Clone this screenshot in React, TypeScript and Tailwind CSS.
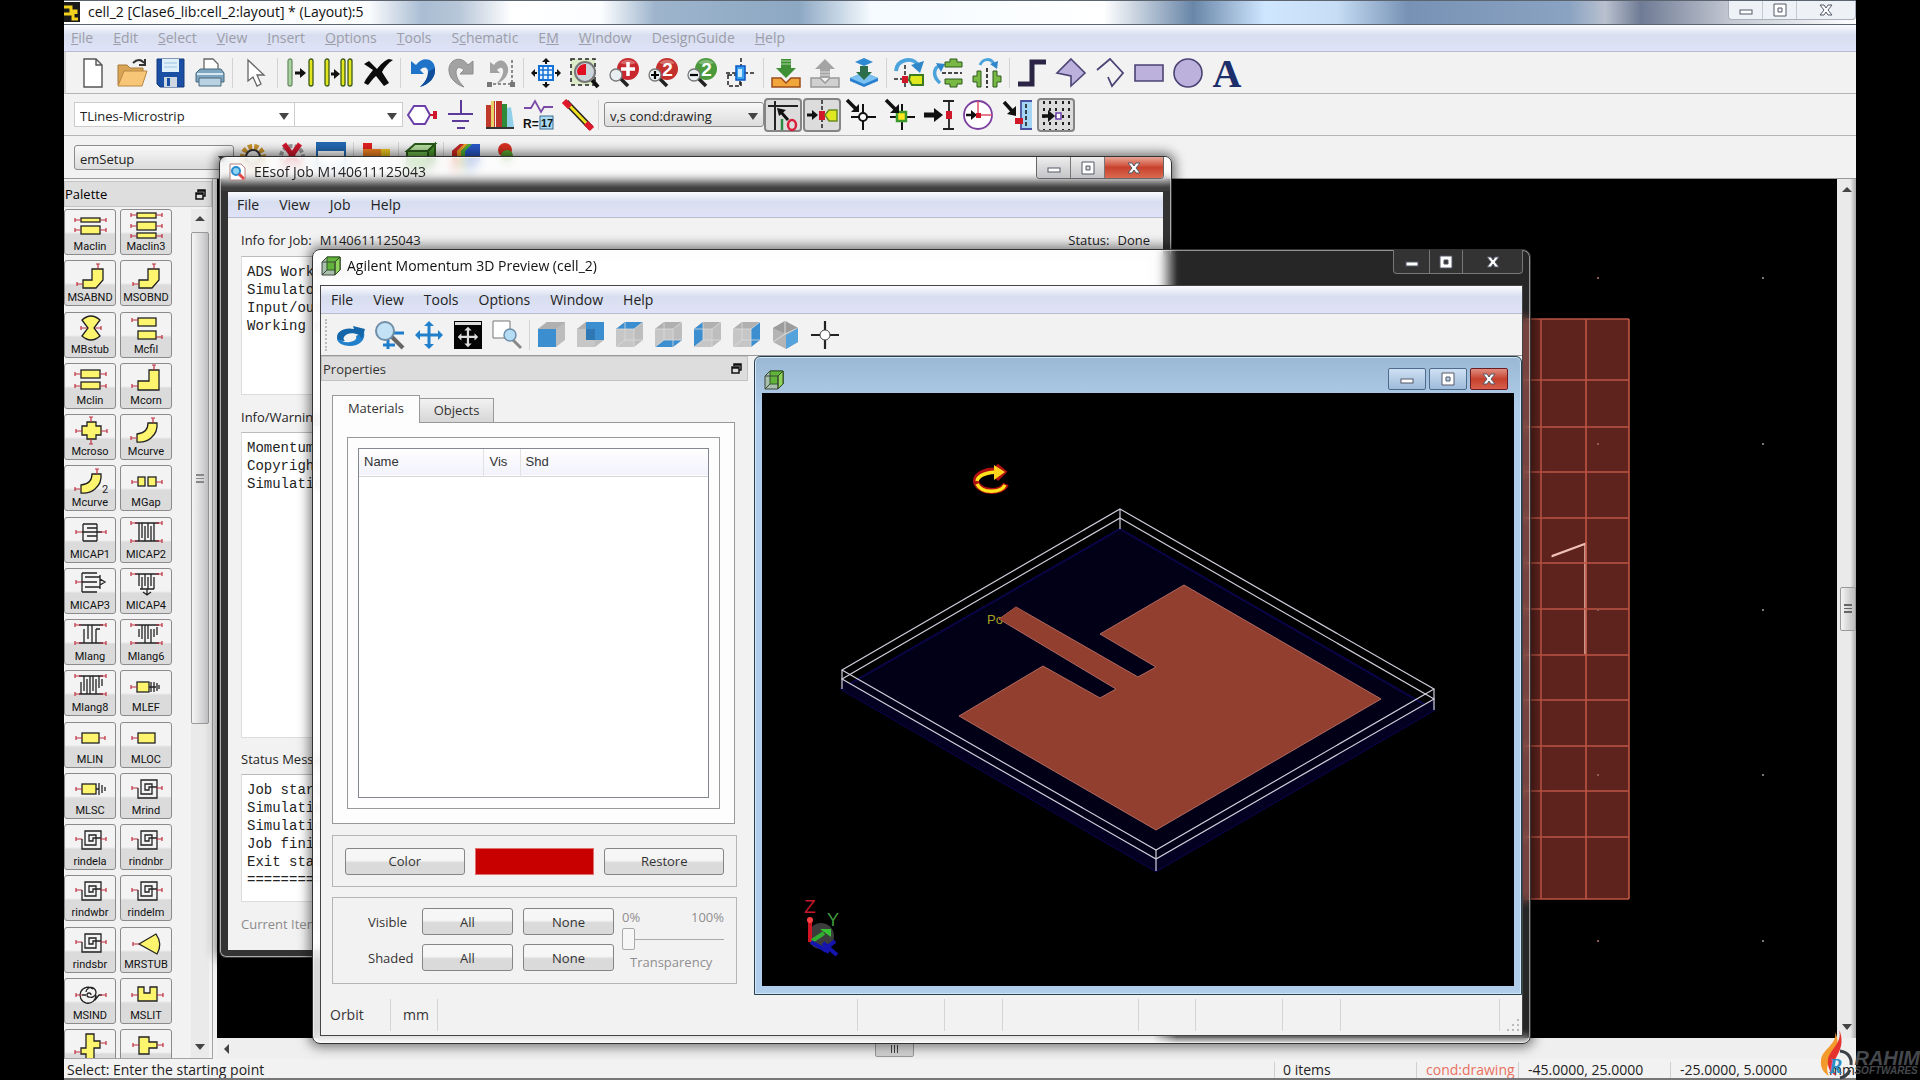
import React from 'react';

const ui = 'font-["Open_Sans","Noto_Sans",sans-serif]';

interface IconProps {
    children: React.ReactNode;
    className?: string;
}

const Icon: React.FC<IconProps> = ({ children, className = 'size-[30px]' }) => (
    <svg viewBox="0 0 30 30" className={`${className} block shrink-0 overflow-visible`} fill="none">
        {children}
    </svg>
);

interface ToolProps {
    name: string;
    children: React.ReactNode;
}

const Tool: React.FC<ToolProps> = ({ name, children }) => (
    <button type="button" aria-label={name} className="block shrink-0">
        <Icon>{children}</Icon>
    </button>
);

const Sep = () => <div className="mx-[7px] h-[30px] w-px shrink-0 bg-[#d2d2d4]" />;

/* ---------- main toolbar icons ---------- */

const Finger: React.FC<{ x: number; pale?: boolean }> = ({ x, pale }) => (
    <rect x={x} y="1" width="4" height="27" rx="2" fill={pale ? '#a9d3a0' : '#e3e61c'} stroke={pale ? '#6d8f68' : '#3c5a1a'} strokeWidth="1.3" />
);

const Lens: React.FC<{ color: string; mark: string; sign: string }> = ({ color, mark, sign }) => (
    <>
        <path d="M11 20l8 8" stroke="#222" strokeWidth="3.5" />
        <circle cx="19" cy="11" r="11" fill={color} />
        <path d="M11 5a10 8 0 0 1 16 0a12 6 0 0 1-16 0" fill="#fff" opacity=".3" />
        {mark === '+'
            ? <path d="M19 4v14M12 11h14" stroke="#fff" strokeWidth="3.5" />
            : <text x="19.500" y="18" textAnchor="middle" fontSize="19" fontWeight="700" fill="#fff" fontFamily="Liberation Sans">{mark}</text>}
        <circle cx="7" cy="17" r="6" fill="#e8eef2" stroke="#777" strokeWidth="1.3" />
        {sign && <path d={sign === '+' ? 'M3 17h8M7 13v8' : 'M3 17h8'} stroke="#000" strokeWidth="2.200" />}
    </>
);

const fileTools = [
    { name: 'New', art: <path d="M6 1h12l6 6v22H6zM18 1v6h6" fill="#fff" stroke="#555" strokeWidth="1.400" /> },
    {
        name: 'Open',
        art: (
            <>
                <path d="M1 27V7h9l3 3h13v5" fill="#d9a455" stroke="#a87936" />
                <path d="M1 28L7 13h23l-5 15z" fill="#f7c777" stroke="#b98743" />
                <path d="M16 5c4-4 8-4 11 0M28 1v6h-6" stroke="#333" strokeWidth="2" />
            </>
        ),
    },
    {
        name: 'Save',
        art: (
            <>
                <path d="M1 1h27v28H4l-3-3z" fill="#1b4fa3" stroke="#123a7c" />
                <path d="M6 1h17v13H6z" fill="#dff0fb" />
                <path d="M8 5h13M8 9h13" stroke="#9cc4e4" />
                <path d="M8 19h13v10H8z" fill="#cfd8e0" />
                <path d="M11 20h3v8h-3z" fill="#1b4fa3" />
            </>
        ),
    },
    {
        name: 'Print',
        art: (
            <>
                <path d="M9 14V1h9l5 5v8" fill="#fff" stroke="#666" strokeWidth="1.300" />
                <path d="M1 15l4-4h21l3 4v9H1z" fill="#7fa6c0" stroke="#49687c" />
                <path d="M4 20h22v8H4z" fill="#b8d2e2" stroke="#49687c" />
                <path d="M2 16h26" stroke="#d8e8f2" strokeWidth="2" />
            </>
        ),
    },
];

const pointerTools = [
    { name: 'Pointer', art: <path d="M8 2v21l5-4 4 9 4-2-4-9h7z" fill="#fff" stroke="#666" strokeWidth="1.300" /> },
];

const copyTools = [
    { name: 'Move', art: <><Finger x={3} pale /><Finger x={24} /><path d="M10 15h6" stroke="#111" strokeWidth="3" /><path d="M15 10l6 5-6 5z" fill="#111" /></> },
    { name: 'Copy', art: <><Finger x={1} /><Finger x={17} /><Finger x={24} /><path d="M7 16h4" stroke="#111" strokeWidth="3" /><path d="M10 11l6 5-6 5z" fill="#111" /></> },
    { name: 'Delete', art: <path d="M1 6l5-3 8 8c3-4 8-9 12-10l4 1c-5 3-9 8-11 12l7 11-5 3-8-10c-4 3-6 7-8 9l-4-2c2-5 6-9 9-13z" fill="#0b0b0b" /> },
];

const undoTools = [
    { name: 'Undo', art: <><path d="M3 3v13h13l-4-4c4-4 8-3 8 2 0 6-3 10-8 15 9-3 16-9 15-19C26 0 14-2 8 7z" fill="#1f74c9" /><path d="M20 14c0 6-3 10-8 15 9-3 16-9 15-19" fill="#0f4c9a" /></> },
    { name: 'Redo', art: <path d="M26 3v13H13l4-4c-4-4-8-3-8 2 0 5 3 10 8 15C8 26 1 19 2 10 4 0 15-2 21 7z" fill="#a2a2a2" stroke="#8c8c8c" /> },
    { name: 'Undo region', art: <><path d="M4 4v11h10l-3-3c4-4 7-2 6 3-1 4-3 7-7 11 8-3 13-9 12-16C20 1 12 0 8 7z" fill="#a2a2a2" /><path d="M26 2v24H3" stroke="#8c8c8c" strokeWidth="2" strokeDasharray="3 2" /><path d="M1 24h5v5H1zM24 24h5v5h-5z" fill="#777" /></> },
];

const zoomTools = [
    { name: 'View all', art: <><path d="M8 8h14v14H8z" fill="#eaf4ff" stroke="#1471d8" strokeWidth="2" /><path d="M8 12h14M8 17h14M12 8v14M17 8v14" stroke="#1471d8" strokeWidth="1.500" /><path d="M15 6V1M15 24v5M6 15H1M24 15h5" stroke="#111" strokeWidth="2" /><path d="M11 4l4-4 4 4zM11 26l4 4 4-4zM4 11l-4 4 4 4zM26 11l4 4-4 4z" fill="#111" /></> },
    { name: 'Zoom area', art: <><path d="M1 1h24v26H1z" fill="#dcebc8" stroke="#222" strokeDasharray="4 3" strokeWidth="1.500" /><path d="M22 22l6 7" stroke="#111" strokeWidth="4" /><circle cx="15" cy="14" r="10" fill="#ccd4dc" stroke="#777" strokeWidth="2" /><path d="M7 14a8 8 0 0 1 9-8v11H8z" fill="#e01020" /></> },
    { name: 'Zoom in', art: <Lens color="#c8272d" mark="+" sign="" /> },
    { name: 'Zoom in by 2', art: <Lens color="#c4302c" mark="2" sign="+" /> },
    { name: 'Zoom out by 2', art: <Lens color="#4a9a3c" mark="2" sign="-" /> },
    { name: 'Zoom to point', art: <><path d="M2 17h12v11H2zM0 15h30M15 0v30" stroke="#222" strokeWidth="1.500" strokeDasharray="4 2" /><path d="M10 8h9v14h-9z" fill="#39a0ee" stroke="#0b57c4" strokeWidth="1.500" /><path d="M12 11h4v8h-4z" fill="#c9ecff" /></> },
];

const hierarchyTools = [
    { name: 'Push into', art: <><path d="M1 20h9l5 5 5-5h9v9H1z" fill="#f0a63a" stroke="#9c4c1c" strokeWidth="1.500" /><path d="M10 1h10v9h5L15 20 5 10h5z" fill="#3f8f35" /><path d="M10 3h10M10 6h10" stroke="#a9d39f" /></> },
    { name: 'Pop out', art: <><path d="M1 20h9l5 5 5-5h9v9H1z" fill="#d0d0d0" stroke="#999" strokeWidth="1.500" /><path d="M10 20h10v-9h5L15 1 5 11h5z" fill="#a4a4a4" /><path d="M10 14h10M10 17h10" stroke="#ddd" /></> },
    { name: 'Push stack', art: <><path d="M1 20l14-6 14 6v3l-14 6-14-6z" fill="#2a7fd0" /><path d="M1 20l14-6 14 6-14 6z" fill="#7cc2f0" /><path d="M6 4l9-4 9 4-9 4z" fill="#2f8ad4" /><path d="M11 8h8v6h4l-8 8-8-8h4z" fill="#2d6e4c" /></> },
];

const rotateTools = [
    { name: 'Rotate', art: <><path d="M2 13C3 1 18-1 23 6" stroke="#4ba3dc" strokeWidth="4" /><path d="M17 7l13-4-4 12z" fill="#2f86c8" /><path d="M0 21h9M11 7v23" stroke="#222" strokeWidth="1.500" strokeDasharray="4 2" /><path d="M8 18h6v7H8z" fill="#d01828" /><path d="M16 17h13v10H18l-3-5z" fill="#dfe81e" stroke="#3a7a20" strokeWidth="2" /></> },
    { name: 'Mirror X', art: <><path d="M7 25C-1 18 1 10 6 8" stroke="#4ba3dc" strokeWidth="3.500" /><path d="M3 5l9 1-4 8z" fill="#2f86c8" /><path d="M9 15h20" stroke="#111" strokeWidth="1.600" strokeDasharray="4 2" /><path d="M12 9V4h5V1h7v3h5v5zM12 21v5h5v3h7v-3h5v-5z" fill="#78b843" stroke="#2c5a1c" /></> },
    { name: 'Mirror Y', art: <><path d="M8 7c3-7 11-7 14-1" stroke="#4ba3dc" strokeWidth="3" /><path d="M18 6l8-3-1 8z" fill="#2f86c8" /><path d="M15 10v20" stroke="#111" strokeWidth="1.600" strokeDasharray="4 2" /><path d="M9 13H5v5H1v6h4v5h4zM21 13h4v5h4v6h-4v5h-4z" fill="#78b843" stroke="#2c5a1c" /></> },
];

const drawTools = [
    { name: 'Path', art: <path d="M1 26h14V4h14" stroke="#2b2445" strokeWidth="5" /> },
    { name: 'Polygon', art: <path d="M15 1l14 14-14 13V18L1 15z" fill="#bcb0dc" stroke="#4b4374" strokeWidth="1.600" /> },
    { name: 'Polyline', art: <path d="M2 12L15 1l13 14-11 13-4-9" stroke="#4b4374" strokeWidth="1.800" /> },
    { name: 'Rectangle', art: <path d="M1 7h28v16H1z" fill="#bcb0dc" stroke="#4b4374" strokeWidth="1.600" /> },
    { name: 'Circle', art: <circle cx="15" cy="15" r="14" fill="#bcb0dc" stroke="#4b4374" strokeWidth="1.600" /> },
    { name: 'Text', art: <text x="15" y="29" textAnchor="middle" fontFamily="Liberation Serif" fontWeight="700" fontSize="40" fill="#1c2f6b">A</text> },
];

const toolGroups = [fileTools, pointerTools, copyTools, undoTools, zoomTools, hierarchyTools, rotateTools, drawTools];

const insertTools = [
    { name: 'Port', art: <><path d="M1 15L7 6h11l5 9-5 9H7z" stroke="#6b3fa8" strokeWidth="2" fill="#fff" /><path d="M23 15h6" stroke="#d0182c" strokeWidth="2" /><path d="M26 11h4v8h-4z" fill="#d0182c" /></> },
    { name: 'Ground', art: <path d="M15 0v14M2 14h25M6 21h17M11 28h8" stroke="#5b3a99" strokeWidth="2" /> },
    { name: 'Library', art: <><path d="M1 27V5h5v22zM6 27V1h4v26z" fill="#c0392b" /><path d="M6 27V1h3v26z" fill="#e7d36a" /><path d="M11 27V1h6v26z" fill="#b8322a" /><path d="M17 27V4h5v23z" fill="#2e8b3a" /><path d="M22 27V8l4-1 3 20z" fill="#8fd0e8" /><path d="M1 27h28v2H1z" fill="#333" /></> },
    { name: 'Variable', art: <><path d="M0 8h7l4-7 6 11 3-5h9" stroke="#7b4aa8" strokeWidth="1.800" /><rect x="16" y="16" width="13" height="13" fill="#a9dcf4" stroke="#3d6a8c" /><text x="-1" y="28" fontFamily="Liberation Sans" fontWeight="700" fontSize="12" fill="#111">R=</text><text x="17" y="27" fontFamily="Liberation Sans" fontWeight="700" fontSize="11" fill="#111">17</text></> },
    { name: 'Wire', art: <><path d="M3 2l25 26" stroke="#222" strokeWidth="6" /><path d="M3 2l25 26" stroke="#f0e020" strokeWidth="3" /><path d="M1 1l6 6M23 23l6 6" stroke="#e0182c" strokeWidth="6" /></> },
];

const snapTools = [
    { name: 'Snap enable', pressed: true, art: <><path d="M7 1v29M0 6h30" stroke="#222" strokeWidth="2" /><path d="M20 20l-8-9" stroke="#111" strokeWidth="3" /><path d="M9 8l9 2-7 6z" fill="#111" /><path d="M14 19v11" stroke="#2b8b45" strokeWidth="2.500" /><ellipse cx="24" cy="25" rx="4" ry="5" stroke="#d8203c" strokeWidth="2.500" /></> },
    { name: 'Pin snap', pressed: true, art: <><path d="M15 0v30" stroke="#222" strokeWidth="1.500" strokeDasharray="4 2" /><path d="M0 15h5" stroke="#111" strokeWidth="3" /><path d="M5 10l6 5-6 5z" fill="#111" /><path d="M12 11h6v9h-6z" fill="#d01828" /><path d="M30 10h-8l-4 5 4 6h8z" fill="#dfe81e" stroke="#6b8c20" strokeWidth="1.500" /></> },
    { name: 'Vertex snap', art: <><path d="M17 4v26M5 17h25" stroke="#111" strokeWidth="2" /><circle cx="17" cy="17" r="4" fill="#fff" stroke="#111" strokeWidth="2" /><path d="M1 0l9 9" stroke="#111" strokeWidth="3.500" /><path d="M13 4v8H5z" fill="#111" /></> },
    { name: 'Edge snap', art: <><path d="M17 4v26M5 17h25" stroke="#111" strokeWidth="2" /><path d="M12 12h9v9h-9z" fill="#ffe61e" stroke="#3b9a2b" strokeWidth="2.500" /><path d="M1 0l9 9" stroke="#111" strokeWidth="3.500" /><path d="M14 4v9H5z" fill="#111" /></> },
    { name: 'Midpoint snap', art: <><path d="M19 1h11M19 29h11M25 1v28" stroke="#222" strokeWidth="1.800" /><path d="M0 15h11" stroke="#111" strokeWidth="5" /><path d="M10 8l9 7-9 7z" fill="#111" /><path d="M22 11h6v8h-6z" fill="#d01828" /></> },
    { name: 'Center snap', art: <><circle cx="15" cy="15" r="14" fill="#fff" stroke="#7b3fa0" strokeWidth="1.800" /><path d="M15 1v14h14" stroke="#e0506a" strokeWidth="1.500" /><path d="M3 15h7" stroke="#111" strokeWidth="2.500" /><path d="M8 10l6 5-6 5z" fill="#111" /><path d="M13 13h5v5h-5z" fill="#d01828" /></> },
    { name: 'Intersect snap', art: <><path d="M19 1h11v28H19z" fill="#a4d4f4" /><path d="M30 1H19v28h11" stroke="#4a50a0" strokeWidth="1.800" /><path d="M24 4v22" stroke="#111" strokeWidth="1.500" strokeDasharray="4 2" /><path d="M2 2l9 10" stroke="#111" strokeWidth="3.500" /><path d="M14 6v10l-9-2z" fill="#111" /><path d="M13 18h8v6h-8z" fill="#d01828" /></> },
    { name: 'Grid snap', pressed: true, art: <><path d="M3 1v29M9 1v29M15 1v29M22 1v29M28 1v29" stroke="#222" strokeWidth="2" strokeDasharray="3 4" /><path d="M1 16h7" stroke="#111" strokeWidth="3.500" /><path d="M7 10l7 6-7 6z" fill="#111" /><path d="M15 13h5v6h-5z" fill="#fff" stroke="#6b3fa8" strokeWidth="1.500" /></> },
];

const emTools = [
    { name: 'Simulate', art: <><circle cx="15" cy="15" r="10" stroke="#c8932c" strokeWidth="6" strokeDasharray="4 2" /><circle cx="15" cy="15" r="7" stroke="#333" strokeWidth="2" /></> },
    { name: 'Stop', art: <><circle cx="15" cy="15" r="11" stroke="#999" strokeWidth="4" strokeDasharray="4 2" /><path d="M7 2l16 22M23 2L7 24" stroke="#d0182c" strokeWidth="5" /></> },
    { name: 'Job window', art: <><path d="M1 1h28v26H1z" fill="#fff" stroke="#2468b0" strokeWidth="2" /><path d="M1 1h28v8H1z" fill="#2468b0" /></> },
    { name: 'Substrate', art: <><path d="M2 1h9v12H2z" fill="#e02020" /><path d="M2 7h18v7H2z" fill="#f08020" /><path d="M20 7h9v7h-9z" fill="#f0c820" /></> },
    { name: '3D view', art: <><path d="M1 9l8-7h20l-7 7z" fill="#b6e0a0" stroke="#2a5a1a" strokeWidth="2" /><path d="M1 9h21v18H1z" fill="#6ab84a" stroke="#2a5a1a" strokeWidth="2" /><path d="M22 9l7-7v17l-7 8z" fill="#4a9a2c" stroke="#2a5a1a" strokeWidth="2" /></> },
    { name: 'Fields', art: <><path d="M1 9l8-7h20v18l-7 8H1z" fill="#2858c8" /><path d="M1 9l8-7h4L6 9v19H1z" fill="#d02820" /><path d="M6 9l7-7h4l-7 7v19H6z" fill="#f0a020" /><path d="M10 9l7-7h4l-7 7v19h-4z" fill="#50b030" /></> },
    { name: 'Results', art: <><circle cx="15" cy="8" r="7" fill="#d83020" /><circle cx="17" cy="14" r="6" fill="#58a830" /></> },
];

/* ---------- palette symbols ---------- */

const Pin: React.FC<{ x: number; y: number; d: 'l' | 'r' | 'u' | 'b' }> = ({ x, y, d }) => {
    const path = {
        l: `M${x} ${y}h-6m0 -2v4`,
        r: `M${x} ${y}h6m0 -2v4`,
        u: `M${x} ${y}v-5m-2 0h4`,
        b: `M${x} ${y}v5m-2 0h4`,
    }[d];
    return <path d={path} stroke="#c03040" strokeWidth="1.200" fill="none" />;
};

const Box: React.FC<{ x: number; y: number; w: number; h: number }> = ({ x, y, w, h }) => (
    <rect x={x} y={y} width={w} height={h} fill="#fdf56e" stroke="#222" strokeWidth="1.300" />
);

const Shape: React.FC<{ d: string }> = ({ d }) => <path d={d} fill="#fdf56e" stroke="#222" strokeWidth="1.300" />;
const Wire: React.FC<{ d: string }> = ({ d }) => <path d={d} fill="none" stroke="#222" strokeWidth="1.300" />;

const spiral = (
    <>
        <Pin x={17} y={16} d="l" />
        <Wire d="M17 16V26H36V8H20V22H31V12H24V18H28V15H36" />
        <Pin x={35} y={16} d="r" />
    </>
);

const bend = (
    <>
        <Shape d="M18 21h9V10h11v11l-7 8H18z" />
        <Pin x={18} y={25} d="l" />
        <Pin x={33} y={10} d="u" />
    </>
);

const curve = (
    <>
        <Shape d="M16 21Q27 20 27 10H36Q37 19 30 25Q24 30 16 29Z" />
        <Pin x={16} y={25} d="l" />
        <Pin x={32} y={10} d="u" />
    </>
);

const rails = (
    <>
        <Wire d="M14 7h24M14 25h24" />
        <Pin x={16} y={7} d="l" />
        <Pin x={35} y={7} d="r" />
        <Pin x={16} y={25} d="l" />
        <Pin x={35} y={25} d="r" />
    </>
);

const palette: { label?: string; art: React.ReactNode }[] = [
    { label: 'Maclin', art: <><Box x={16} y={10} w={19} h={4} /><Box x={16} y={18} w={19} h={8} /><Pin x={16} y={12} d="l" /><Pin x={35} y={12} d="r" /><Pin x={16} y={22} d="l" /><Pin x={35} y={22} d="r" /></> },
    { label: 'Maclin3', art: <><Box x={16} y={5} w={19} h={5} /><Box x={16} y={14} w={19} h={8} /><Box x={16} y={25} w={19} h={5} /><Pin x={16} y={7} d="l" /><Pin x={35} y={7} d="r" /><Pin x={16} y={18} d="l" /><Pin x={35} y={18} d="r" /><Pin x={16} y={28} d="l" /><Pin x={35} y={28} d="r" /></> },
    { label: 'MSABND', art: bend },
    { label: 'MSOBND', art: bend },
    { label: 'MBstub', art: <><Shape d="M17 9Q26 1 35 9L29 17L35 25Q26 33 17 25L23 17Z" /><Pin x={22} y={17} d="l" /><Pin x={30} y={17} d="r" /></> },
    { label: 'Mcfil', art: <><Box x={17} y={7} w={18} h={8} /><Box x={17} y={20} w={18} h={8} /><Pin x={17} y={9} d="l" /><Pin x={35} y={26} d="r" /></> },
    { label: 'Mclin', art: <><Box x={16} y={8} w={19} h={8} /><Box x={16} y={20} w={19} h={7} /><Pin x={16} y={12} d="l" /><Pin x={35} y={12} d="r" /><Pin x={16} y={24} d="l" /><Pin x={35} y={24} d="r" /></> },
    { label: 'Mcorn', art: <><Shape d="M28 8h10v20H17v-9h11z" /><Pin x={17} y={24} d="l" /><Pin x={33} y={8} d="u" /></> },
    { label: 'Mcroso', art: <><Shape d="M17 13h5V9h9v4h5v9h-5v4h-9v-4h-5z" /><Pin x={17} y={18} d="l" /><Pin x={36} y={18} d="r" /><Pin x={26} y={9} d="u" /><Pin x={26} y={26} d="b" /></> },
    { label: 'Mcurve', art: curve },
    { label: 'Mcurve', art: <>{curve}<text x="37" y="29" fontSize="11" fontFamily="Roboto" fill="#222">2</text></> },
    { label: 'MGap', art: <><Box x={17} y={13} w={7} h={9} /><Box x={27} y={13} w={8} h={9} /><Pin x={17} y={18} d="l" /><Pin x={35} y={18} d="r" /></> },
    { label: 'MICAP1', art: <><Pin x={17} y={16} d="l" /><Wire d="M17 16h15M18 8v17M18 8h14M18 25h14M32 8v17M22 12h10M22 20h10M32 16h5" /><Pin x={35} y={16} d="r" /></> },
    { label: 'MICAP2', art: <>{rails}<Wire d="M18 7v18M21 7v15M24 10v15M27 7v15M30 10v15M33 7v18" /></> },
    { label: 'MICAP3', art: <><Pin x={17} y={15} d="l" /><Wire d="M17 6v19M17 6h15M20 10h15M17 15h15M20 20h15M17 25h15M35 8v14M35 12l5 3-5 3" /></> },
    { label: 'MICAP4', art: <><Wire d="M14 7h24M18 7v12M21 10v12M24 7v12M27 10v12M30 7v12M33 10v12M19 22h14M26 22v6M22 25l4 3 4-3" /><Pin x={16} y={7} d="l" /><Pin x={35} y={7} d="r" /></> },
    { label: 'Mlang', art: <>{rails}<Wire d="M23 7v14M19 11v14M27 7v18M31 11v14M31 11h4" /></> },
    { label: 'Mlang6', art: <>{rails}<Wire d="M21 7v14M18 11v8M24 7v18M27 7v14M30 11v14M33 11v8M36 9v8" /></> },
    { label: 'Mlang8', art: <>{rails}<Wire d="M16 13v12M19 7v15M22 10v15M25 7v18M28 7v15M31 10v15M34 7v12M37 10v7" /></> },
    { label: 'MLEF', art: <><Box x={16} y={13} w={12} h={10} /><Pin x={16} y={18} d="l" /><Wire d="M28 18h7M30 13v10M33 13v10M36 14v8M38 16v4" /></> },
    { label: 'MLIN', art: <><Box x={17} y={12} w={17} h={10} /><Pin x={17} y={17} d="l" /><Pin x={34} y={17} d="r" /></> },
    { label: 'MLOC', art: <><Box x={17} y={12} w={17} h={10} /><Pin x={17} y={17} d="l" /></> },
    { label: 'MLSC', art: <><Box x={17} y={12} w={14} h={10} /><Pin x={17} y={17} d="l" /><Wire d="M31 17h3M34 11v12M37 13v8M40 15v4" /></> },
    { label: 'Mrind', art: spiral },
    { label: 'rindela', art: spiral },
    { label: 'rindnbr', art: spiral },
    { label: 'rindwbr', art: spiral },
    { label: 'rindelm', art: spiral },
    { label: 'rindsbr', art: spiral },
    { label: 'MRSTUB', art: <><Shape d="M18 18L35 8Q42 18 36 28Z" /><Pin x={18} y={18} d="l" /></> },
    { label: 'MSIND', art: <><Wire d="M17 18h4M26 18a2 2 0 1 0-2 2a5 5 0 1 0-3-5M31 18a8 8 0 1 1-3-6M30 23l4-5h3" /><Pin x={17} y={18} d="l" /><Pin x={35} y={18} d="r" /></> },
    { label: 'MSLIT', art: <><Shape d="M17 10h6v6h6v-6h7v14H17z" /><Pin x={17} y={18} d="l" /><Pin x={36} y={18} d="r" /></> },
    { art: <><Shape d="M21 6h8v7h6v7h-6v12h-8v-6h-5v-6h5z" /><Pin x={35} y={15} d="r" /><Pin x={16} y={24} d="l" /></> },
    { art: <><Shape d="M18 9h10v5h8v6h-8v6H18z" /><Pin x={18} y={17} d="l" /><Pin x={36} y={17} d="r" /></> },
];

/* ---------- shared window parts ---------- */

const Menu: React.FC<{ items: string[]; className?: string }> = ({ items, className = '' }) => (
    <nav className={`flex shrink-0 items-center gap-5 border-b border-[#b9bccb] bg-linear-to-b from-[#fbfcff] via-[#d7deef] via-40% to-[#e0e3f8] text-[14px] leading-[18px] ${className}`}>
        {items.map((item) => {
            const at = item.indexOf('&');
            return (
                <button type="button" key={item}>
                    {at < 0 ? item : <>{item.slice(0, at)}<span className="underline">{item[at + 1]}</span>{item.slice(at + 2)}</>}
                </button>
            );
        })}
    </nav>
);

const FloatIcon = () => (
    <svg viewBox="0 0 11 11" className="size-[11px]" fill="none" stroke="#111" strokeWidth="1.500">
        <path d="M3 3V1h7v6H8M3 2h7M1 4h7v6H1zM1 5h7" />
    </svg>
);

const Minimize = () => (
    <svg viewBox="0 0 14 14" className="size-[14px]"><rect x="1" y="7" width="12" height="4" fill="#fff" stroke="#555968" /></svg>
);
const Maximize = () => (
    <svg viewBox="0 0 14 14" className="size-[14px]"><path fillRule="evenodd" d="M1 1h12v12H1zM5 5h4v4H5z" fill="#fff" stroke="#555968" /></svg>
);
const Close = () => (
    <svg viewBox="0 0 14 14" className="size-[14px]"><path d="M1 2h4l2 3 2-3h4L9 7l4 5H9L7 9l-2 3H1l4-5z" fill="#fff" stroke="#555968" /></svg>
);

const CubeLogo = () => (
    <svg viewBox="0 0 20 20" className="size-5 shrink-0">
        <path d="M1 6l5-5h13v13l-5 5H1z" fill="#a9bfae" stroke="#3c463c" />
        <path d="M6 1h13v13H6z" fill="#62b33a" stroke="#2e5a22" />
        <path d="M14 6l5-5v13l-5 5z" fill="#8fd35c" stroke="#2e4a22" />
        <path d="M1 6h13v13" fill="none" stroke="#3c463c" />
        <path d="M1 19l5-5" stroke="#3c463c" />
    </svg>
);

const Arrow: React.FC<{ d: string; className?: string }> = ({ d, className = '' }) => (
    <svg viewBox="0 0 10 10" className={`size-[10px] ${className}`} fill="#444"><path d={d} /></svg>
);

const Combo: React.FC<{ label: string; value: string; className: string }> = ({ label, value, className }) => (
    <div className={`relative shrink-0 ${className}`}>
        <select aria-label={label} className="h-full w-full appearance-none bg-transparent pl-[5px] text-[13px] leading-[18px] text-[#222] outline-none">
            <option>{value}</option>
        </select>
        <Arrow d="M0 2h10L5 9z" className="pointer-events-none absolute top-2 right-[5px]" />
    </div>
);

/* ---------- main layout window ---------- */

const LayoutCanvas = () => (
    <svg className="h-full w-full" viewBox="217 179 1620 859" preserveAspectRatio="xMaxYMin slice">
        <rect x="1300" y="319" width="329" height="580" fill="#5f231e" />
        {/* the stroke in the fill colour keeps the port number hairline thin */}
        <text x="1536" y="655" fontFamily="Roboto" fontWeight="100" fontSize="160" fill="#f0c0b4" stroke="#5f231e" strokeWidth="2">1</text>
        <g stroke="#bd5544" strokeWidth="1.600" fill="none">
            {[319, 380, 427, 472, 518, 563, 609, 655, 700, 746, 791, 837, 899].map((y) => (
                <path key={y} d={`M1300 ${y}H1629`} />
            ))}
            {[1541, 1586, 1629].map((x) => (
                <path key={x} d={`M${x} 319V899`} />
            ))}
        </g>
        <g fill="#777">
            {[277, 443, 609, 774, 940].map((y) => (
                <React.Fragment key={y}>
                    <rect x="1597" y={y} width="2" height="2" fill="#8a5a54" />
                    <rect x="1762" y={y} width="2" height="2" />
                </React.Fragment>
            ))}
        </g>
    </svg>
);

const Palette = () => (
    <aside className="flex w-[149px] shrink-0 flex-col border-r border-b border-[#a5a5a5]">
        <header className="mt-[2px] flex h-[26px] shrink-0 items-center justify-between border border-[#c3c3c3] bg-[#dfdedf] pr-[5px] text-[13px] leading-[18px]">
            <span>Palette</span>
            <FloatIcon />
        </header>
        <div className="flex min-h-0 flex-1 justify-between pt-[2px] pr-[3px]">
            <div className="min-h-0 overflow-hidden">
                <div className="grid h-[866px] grid-cols-[52px_52px] content-between gap-x-1">
                    {palette.map((item, i) => (
                        <button type="button" key={i} aria-label={item.label ?? 'Component'} className="flex h-[46px] flex-col rounded-[3px] border border-[#8b8b8b] bg-linear-to-b from-[#f3f3f3] from-50% to-[#dbdbdb] to-55%">
                            <svg viewBox="0 2 50 30" className="h-[30px] w-[50px] shrink-0">{item.art}</svg>
                            {item.label && (
                                <span className="w-full text-center font-['Roboto',sans-serif] text-[11px] leading-[13px] text-[#111]">{item.label}</span>
                            )}
                        </button>
                    ))}
                </div>
            </div>
            <div className="flex w-[18px] flex-col items-center bg-[#ebeaeb]">
                <Arrow d="M0 7h10L5 2z" className="mt-[5px] mb-2 shrink-0" />
                <div className="flex h-[492px] w-full shrink-0 items-center justify-center rounded-[2px] border border-[#999] bg-linear-to-r from-[#f5f5f5] to-[#c4c4c8]">
                    <div className="h-[9px] w-2 border-y-2 border-[#888]"><div className="mt-[2px] h-px bg-[#888]" /></div>
                </div>
                <Arrow d="M0 2h10L5 8z" className="mt-auto mb-[6px] shrink-0" />
            </div>
        </div>
    </aside>
);

const MainWindow = () => (
    <div className="flex h-screen flex-col bg-[#f3f2f3]">
        <header className="flex h-[25px] shrink-0 items-start justify-between border-y border-[#5c6470] bg-[#fff] bg-[linear-gradient(90deg,#fff_0%,#fbfcfd_17%,#a9bdd3_20%,#b7c6d8_22%,#fff_25%,#fbfdff_30%,#9db4cc_33%,#8da8c3_41%,#f4faff_45%,#fff_58%,#6986a8_63%,#cfe6ff_67%,#c7ddf5_71%,#7792b5_75%,#8ba3c2_84%,#b9c1cf_86%,#6f7b95_88%,#c3c8d2_93%,#fff_100%)]">
            <div className="flex items-center gap-2">
                <svg viewBox="0 0 16 20" className="h-[20px] w-[16px]">
                    <path d="M0 0h16v20H0z" fill="#1a1a1a" />
                    <path d="M0 5h7v4h5v3M0 12h9v5h5" fill="none" stroke="#f2d21c" strokeWidth="3" />
                </svg>
                <h1 className="text-[14px] leading-[22px] text-[#111]">cell_2 [Clase6_lib:cell_2:layout] * (Layout):5</h1>
            </div>
            <div className="flex h-[19px] rounded-b-[4px] border border-t-0 border-[#aab0bb] bg-[#eef1f5]">
                <button type="button" aria-label="Minimize" className="flex w-[34px] items-center justify-center border-r border-[#c4c9d2]"><Minimize /></button>
                <button type="button" aria-label="Restore" className="flex w-[34px] items-center justify-center border-r border-[#c4c9d2]"><Maximize /></button>
                <button type="button" aria-label="Close" className="flex w-[58px] items-center justify-center"><Close /></button>
            </div>
        </header>

        <Menu
            className="h-[27px] pl-[7px] text-[#9c9da8]"
            items={['&File', '&Edit', '&Select', '&View', '&Insert', '&Options', '&Tools', 'S&chematic', 'E&M', '&Window', 'DesignGuide', '&Help']}
        />

        <div className="flex h-[42px] shrink-0 items-center border-b border-l-2 border-[#b5b5b5] border-l-[#d5d5d5] pl-3">
            {toolGroups.map((group, i) => (
                <React.Fragment key={i}>
                    {i > 0 && <Sep />}
                    <div className="flex gap-[9px]">
                        {group.map((tool) => <Tool key={tool.name} name={tool.name}>{tool.art}</Tool>)}
                    </div>
                </React.Fragment>
            ))}
        </div>

        <div className="flex h-[42px] shrink-0 items-center border-b border-[#b5b5b5] pl-[10px]">
            <Combo label="Component library" value="TLines-Microstrip" className="h-[25px] w-[221px] border border-[#ccc] bg-white" />
            <Combo label="Component" value="" className="h-[25px] w-[108px] border border-l-0 border-[#ccc] bg-white" />
            <div className="ml-1 flex gap-[9px]">
                {insertTools.map((tool) => <Tool key={tool.name} name={tool.name}>{tool.art}</Tool>)}
            </div>
            <div className="mx-[5px] h-[30px] w-px shrink-0 bg-[#d2d2d4]" />
            <Combo label="Layer" value="v,s cond:drawing" className="h-[25px] w-[160px] rounded-[3px] border border-[#8b8b8b] bg-linear-to-b from-[#f8f8f8] to-[#dcdcdc]" />
            <div className="flex gap-px">
                {snapTools.map((tool) => (
                    <button
                        type="button"
                        key={tool.name}
                        aria-label={tool.name}
                        className={tool.pressed ? 'flex h-[34px] w-[38px] items-center justify-center rounded-[4px] border-2 border-[#858585] bg-[#dcdcdc]' : 'flex h-[34px] w-[38px] items-center justify-center'}
                    >
                        <Icon>{tool.art}</Icon>
                    </button>
                ))}
            </div>
        </div>

        <div className="flex h-[43px] shrink-0 items-center border-b border-[#999] pl-[10px]">
            <Combo label="EM setup" value="emSetup" className="h-[25px] w-[160px] rounded-[3px] border border-[#8b8b8b] bg-linear-to-b from-[#f8f8f8] to-[#dcdcdc]" />
            <div className="ml-1 flex gap-[9px]">
                {emTools.slice(0, 3).map((tool) => <Tool key={tool.name} name={tool.name}>{tool.art}</Tool>)}
            </div>
            {emTools.slice(3, 6).map((tool) => (
                <React.Fragment key={tool.name}>
                    <Sep />
                    <Tool name={tool.name}>{tool.art}</Tool>
                </React.Fragment>
            ))}
            <div className="ml-[9px]"><Tool name={emTools[6].name}>{emTools[6].art}</Tool></div>
        </div>

        <div className="flex min-h-0 flex-1">
            <Palette />
            <div className="ml-1 flex min-w-0 flex-1 flex-col">
                <div className="flex min-h-0 flex-1">
                    <div className="min-w-0 flex-1 bg-black"><LayoutCanvas /></div>
                    <div className="flex w-[19px] flex-col items-center justify-between bg-linear-to-r from-[#ebeaeb] from-70% to-[#aaa] py-[6px]">
                        <Arrow d="M0 7h10L5 2z" />
                        <div className="flex h-[44px] w-4 items-center justify-center self-end rounded-[2px] border border-[#999] bg-linear-to-r from-[#f5f5f5] to-[#bbb]">
                            <div className="h-[9px] w-2 border-y-2 border-[#666]"><div className="mt-[2px] h-px bg-[#666]" /></div>
                        </div>
                        <Arrow d="M0 2h10L5 8z" />
                    </div>
                </div>
                <div className="flex h-[21px] shrink-0 items-center bg-[#f0eff0] pl-[5px]">
                    <Arrow d="M7 0v10L2 5z" />
                    <div className="ml-[643px] flex h-[17px] w-[39px] items-center justify-center gap-[2px] rounded-[2px] border border-[#999] bg-linear-to-b from-[#f0f0f0] to-[#cfcfcf]">
                        <div className="h-2 w-px bg-[#444]" /><div className="h-2 w-px bg-[#444]" /><div className="h-2 w-px bg-[#444]" />
                    </div>
                </div>
            </div>
        </div>

        <footer className="flex h-[21px] shrink-0 items-end overflow-hidden border-b-2 border-[#777] text-[14px] leading-[16px] text-[#222]">
            <span className="min-w-0 flex-1 pl-[3px]">Select: Enter the starting point</span>
            <span className="w-[142px] border-l border-[#d0d0d0] pl-2">0 items</span>
            <span className="w-[102px] border-l border-[#d0d0d0] pl-[9px] text-[#e8705f]">cond:drawing</span>
            <span className="w-[152px] border-l border-[#d0d0d0] pl-[9px]">-45.0000, 25.0000</span>
            <span className="w-[151px] border-l border-[#d0d0d0] pl-[9px]">-25.0000, 5.0000</span>
            <span className="w-[35px] pl-[8px]">mm</span>
        </footer>
    </div>
);

/* ---------- simulation job window ---------- */

const Log: React.FC<{ lines: string[]; className: string }> = ({ lines, className }) => (
    <div className={`overflow-hidden border border-[#dcdcdc] border-t-[#bbb] bg-white px-[5px] pt-[6px] font-['Liberation_Mono',monospace] text-[14px] leading-[18px] text-[#222] ${className}`}>
        {lines.map((line) => <p key={line} className="whitespace-nowrap">{line}</p>)}
    </div>
);

const JobWindow = () => (
    <section className="absolute top-[156px] right-[748px] bottom-[122px] left-[219px] flex flex-col rounded-[7px] border border-[#333] bg-white/20 px-[7px] pb-[6px] shadow-[0_0_12px_3px_rgba(0,0,0,0.55),inset_0_0_0_1px_rgba(255,255,255,0.6)] backdrop-blur-[5px]">
        <header className="-mx-[6px] flex h-[34px] shrink-0 items-start justify-between rounded-t-[6px] bg-linear-to-b from-white/70 from-40% to-white/5 to-90% px-[6px]">
            <div className="flex items-center gap-2 pt-[5px] pl-[2px]">
                <svg viewBox="0 0 17 18" className="h-[18px] w-[17px]">
                    <path d="M1 1h11l4 4v12H1z" fill="#fff" stroke="#b08080" />
                    <circle cx="7" cy="8" r="4" fill="#8fd4f2" stroke="#2a8cd0" strokeWidth="2" />
                    <path d="M10 11l5 5" stroke="#e04848" strokeWidth="3" />
                </svg>
                <h2 className="text-[14px] leading-[20px] text-[#222]">EEsof Job M140611125043</h2>
            </div>
            <div className="flex h-[22px] overflow-hidden rounded-b-[4px] border border-t-0 border-[#666]">
                <button type="button" aria-label="Minimize" className="flex w-[34px] items-center justify-center border-r border-[#777] bg-linear-to-b from-[#eee] to-[#c4c4c8]"><Minimize /></button>
                <button type="button" aria-label="Maximize" className="flex w-[34px] items-center justify-center border-r border-[#777] bg-linear-to-b from-[#eee] to-[#c4c4c8]"><Maximize /></button>
                <button type="button" aria-label="Close" className="flex w-[58px] items-center justify-center bg-linear-to-b from-[#e8a595] via-[#c8412c] via-50% to-[#da6a50]"><Close /></button>
            </div>
        </header>
        <div className="flex min-h-0 flex-1 flex-col border border-[#333] bg-[#f3f2f3]">
            <Menu className="h-[26px] pl-[9px] text-[#222]" items={['File', 'View', 'Job', 'Help']} />
            <div className="flex min-h-0 flex-1 flex-col px-[13px] pb-4 text-[13px] leading-[20px] text-[#222]">
                <div className="mt-3 mb-[6px] flex justify-between">
                    <p className="flex gap-2"><span>Info for Job:</span><span>M140611125043</span></p>
                    <p className="flex gap-2"><span>Status:</span><span>Done</span></p>
                </div>
                <Log className="h-[139px] shrink-0" lines={['ADS Workspace', 'Simulator', 'Input/output', 'Working dir']} />
                <p className="mt-3 mb-[5px]">Info/Warnings</p>
                <Log className="min-h-0 flex-1" lines={['Momentum', 'Copyright', 'Simulation']} />
                <p className="mt-[11px] mb-[5px]">Status Messages</p>
                <Log className="h-[128px] shrink-0" lines={['Job started', 'Simulating', 'Simulation', 'Job finished', 'Exit status', '===========']} />
                <p className="mt-3 text-[#8b8b8b]">Current Item</p>
            </div>
        </div>
    </section>
);

/* ---------- 3D preview window ---------- */

const cubeFaces = {
    front: 'M1 9h18v18H1z',
    back: 'M10 2h18v18H10z',
    top: 'M1 9l9-7h18l-9 7z',
    bottom: 'M1 27l9-7h18l-9 7z',
    left: 'M1 9l9-7v18l-9 7z',
    right: 'M19 9l9-7v18l-9 7z',
};

const Cube: React.FC<{ face: keyof typeof cubeFaces }> = ({ face }) => (
    <>
        <path d="M1 9l9-7h18v18l-9 7H1z" fill="#bdbdbd" />
        <path d={cubeFaces.front} fill="#c6c6c6" />
        <path d={cubeFaces.top} fill="#b0b0b0" />
        <path d={cubeFaces[face]} fill="#3b8ed0" />
        {face === 'back' && <path d="M10 9h9v11h-9z" fill="#2f78b4" />}
        {face !== 'front' && face !== 'back' && <path d="M1 9h18v18M19 9l9-7M10 2v18h18M10 20l-9 7" stroke="#dcdcdc" strokeWidth=".8" />}
    </>
);

const cross = 'M15 1l5 5h-3.500v7.500H24V10l5 5-5 5v-3.500h-7.500V24H20l-5 5-5-5h3.500v-7.500H6V20l-5-5 5-5v3.500h7.500V6H10z';

const viewTools = [
    { name: 'Orbit', art: <><path d="M28 12c2 8-5 14-14 14C6 26 0 22 1 17c3 4 8 6 13 5 5-1 7-3 6-6z" fill="#2080cc" /><path d="M1 17C1 11 9 7 18 9l-1-3 12 3-3 10-3-4c-6-3-13-2-15 2-1 2 0 3 1 4-5 0-8-2-8-4z" fill="#1566a8" /></> },
    { name: 'Zoom', art: <><path d="M17 13h12M8 25h12M13 20v9" stroke="#1f7ecb" strokeWidth="3" /><path d="M17 17l11 11" stroke="#666" strokeWidth="4" /><circle cx="10" cy="11" r="9" fill="#c4e2f6" stroke="#6f8ea8" strokeWidth="2" /></> },
    { name: 'Pan', art: <path d={cross} fill="#2080cc" /> },
    { name: 'Fit', art: <><path d="M1 1h28v28H1z" fill="#050505" /><path d="M2 2h26v3H2z" fill="#ddd" /><g transform="translate(4 6) scale(.73)"><path d={cross} fill="#ddd" /></g></> },
    { name: 'Zoom window', art: <><path d="M1 1h17v17H1z" fill="#fff" stroke="#777" /><path d="M21 20l8 8" stroke="#888" strokeWidth="3" /><circle cx="18" cy="15" r="6" fill="#b4dcf4" stroke="#6f8ea8" strokeWidth="1.500" /></> },
];

const faceTools = [
    { name: 'Front', art: <Cube face="front" /> },
    { name: 'Back', art: <Cube face="back" /> },
    { name: 'Top', art: <Cube face="top" /> },
    { name: 'Bottom', art: <Cube face="bottom" /> },
    { name: 'Left', art: <Cube face="left" /> },
    { name: 'Right', art: <Cube face="right" /> },
    { name: 'Isometric', art: <><path d="M2 8l12-7 13 7v14l-12 7-13-7z" fill="#b4b4b4" /><path d="M2 8l12-7 13 7-12 6z" fill="#9c9c9c" /><path d="M14 1v13M2 22l12-8M27 8l-13 6" stroke="#ddd" /><path d="M15 15l12-7v14l-12 7z" fill="#55a3dc" /></> },
    { name: 'Center', art: <><path d="M15 1v9M15 20v9M1 15h9M20 15h9" stroke="#222" strokeWidth="2.200" /><circle cx="15" cy="15" r="5" fill="#fff" stroke="#444" /></> },
];

const Scene = () => (
    <svg className="h-full w-full" viewBox="761 393 752 593" preserveAspectRatio="xMidYMid meet" fill="none">
        <path d="M1119 529L1433 710 1155 871 840 689z" fill="#020017" stroke="#0a0548" strokeWidth="2" />
        <path d="M840 679V689L1155 871 1433 710V699L1155 859z" fill="#030022" />
        <path d="M1183 585L1380 699 1155 830 958 716 1042 666 1099 698 1115 689 998 619 1015 607 1137 677 1155 667 1099 634z" fill="#923f30" stroke="#b06a60" />
        <g stroke="#cfcfdc" strokeWidth="1.200">
            <path d="M1119 509L1433 689 1155 850 841 670z" />
            <path d="M1119 518L1433 699 1155 859 841 679z" />
            <path d="M1119 509v20M1433 689v21M1155 850v21M841 670v19" />
        </g>
        <text x="986" y="624" fontSize="13" fontFamily="Liberation Sans" fill="#a3a020">Po</text>
        <path d="M998 619l17-12 10 6-14 13z" fill="#923f30" />
        <path d="M998 471c-12-2-23 3-23 10 1 11 25 14 30 3M995 466l7 6-7 7" stroke="#b01010" strokeWidth="6" />
        <path d="M976 481c1-6 11-9 22-9M976 484c5 10 24 9 28 1" stroke="#ffe11c" strokeWidth="3.500" />
        <path d="M993 465l11 7-11 8z" fill="#ffd21c" />
        <circle cx="820" cy="936" r="13" fill="#3c3c3c" />
        <path d="M809 918v24" stroke="#d01424" strokeWidth="4" />
        <circle cx="809" cy="920" r="3" fill="#ff4040" />
        <path d="M811 941l12-8" stroke="#2fae2f" strokeWidth="4" />
        <path d="M819 929h11v8z" fill="#35c235" />
        <path d="M810 942l18 10M822 951l12-10M822 943l14 12" stroke="#1414b0" strokeWidth="4" />
        <text x="803" y="913" fontSize="19" fontFamily="Liberation Sans" fill="#c4182c">Z</text>
        <text x="826" y="926" fontSize="18" fontFamily="Liberation Sans" fill="#3f9a3f">Y</text>
    </svg>
);

const PushButton: React.FC<{ children: string; className?: string }> = ({ children, className = '' }) => (
    <button type="button" className={`h-[27px] rounded-[3px] border border-[#858585] bg-linear-to-b from-[#f6f6f6] from-45% to-[#dadada] to-55% text-center text-[13px] leading-[20px] ${className}`}>
        {children}
    </button>
);

const Properties = () => (
    <aside className="mr-[6px] flex w-[427px] shrink-0 flex-col text-[13px] leading-[18px] text-[#333]">
        <header className="flex h-[25px] shrink-0 items-center justify-between border border-[#c3c3c3] bg-[#dedddd] pr-[5px] pl-px">
            <span>Properties</span>
            <FloatIcon />
        </header>
        <div className="flex min-h-0 flex-1 flex-col px-[11px] pt-[14px] pb-[11px]">
            <div role="tablist" className="-mb-px flex shrink-0 items-end">
                <button type="button" role="tab" aria-selected="true" className="z-10 h-[28px] w-[88px] border border-b-0 border-[#999] bg-[#fdfdfd] pb-[3px]">Materials</button>
                <button type="button" role="tab" aria-selected="false" className="-ml-px h-[25px] w-[75px] border border-[#999] bg-linear-to-b from-[#f2f2f2] to-[#d6d6d6] pb-[2px]">Objects</button>
            </div>
            <div className="mr-[2px] flex min-h-0 flex-1 border border-[#999] bg-[#fdfdfd] p-[14px]">
                <div className="flex flex-1 border border-[#999] p-[10px]">
                    <div className="flex-1 border border-[#828790] bg-white">
                        <table className="w-full table-fixed text-left font-['Liberation_Sans',sans-serif] text-[13px]">
                            <thead>
                                <tr className="h-[27px] border-b border-[#d5d5d5] bg-linear-to-b from-white to-[#f2f2fb]">
                                    <th className="w-[124px] border-r border-[#e2e2e2] pl-[5px] font-normal">Name</th>
                                    <th className="w-[37px] border-r border-[#e2e2e2] pl-[6px] font-normal">Vis</th>
                                    <th className="pl-[5px] font-normal">Shd</th>
                                </tr>
                            </thead>
                        </table>
                    </div>
                </div>
            </div>
            <div className="mt-[11px] flex h-[52px] shrink-0 items-center gap-[10px] border border-[#b5b5b5] px-3">
                <PushButton className="flex-1">Color</PushButton>
                <div className="h-[27px] flex-1 border border-[#e07070] bg-[#c90000]" />
                <PushButton className="flex-1">Restore</PushButton>
            </div>
            <div className="mt-[10px] flex h-[87px] shrink-0 gap-2 border border-[#b5b5b5] pt-[10px] pr-3 pl-[35px]">
                <div className="grid grid-cols-[44px_91px_91px] content-start items-center gap-x-[10px] gap-y-[9px]">
                    <span>Visible</span>
                    <PushButton>All</PushButton>
                    <PushButton>None</PushButton>
                    <span>Shaded</span>
                    <PushButton>All</PushButton>
                    <PushButton>None</PushButton>
                </div>
                <div className="flex flex-1 flex-col text-[#8f8f8f]">
                    <div className="flex justify-between"><span>0%</span><span>100%</span></div>
                    <input
                        id="transparency"
                        type="range"
                        defaultValue={0}
                        disabled
                        className="h-[27px] w-full appearance-none bg-transparent [&::-webkit-slider-runnable-track]:h-px [&::-webkit-slider-runnable-track]:bg-[#aaa] [&::-webkit-slider-thumb]:-mt-[11px] [&::-webkit-slider-thumb]:h-[22px] [&::-webkit-slider-thumb]:w-[13px] [&::-webkit-slider-thumb]:appearance-none [&::-webkit-slider-thumb]:rounded-[2px] [&::-webkit-slider-thumb]:border [&::-webkit-slider-thumb]:border-[#aaa] [&::-webkit-slider-thumb]:bg-[#f6f6f6]"
                    />
                    <label htmlFor="transparency" className="pl-2">Transparency</label>
                </div>
            </div>
        </div>
    </aside>
);

const ViewPane = () => (
    <div className="flex min-w-0 flex-1 flex-col rounded-t-[6px] border border-[#25404f] bg-linear-to-b from-[#9ab7d4] to-[#b0cdeb] to-8% px-[7px] pb-2 shadow-[inset_0_0_0_1px_#d3e6f7]">
        <header className="flex h-[36px] shrink-0 items-end justify-between pr-[6px] pb-[3px] pl-[2px]">
            <CubeLogo />
            <div className="flex gap-[3px]">
                <button type="button" aria-label="Minimize view" className="flex h-[22px] w-[38px] items-center justify-center rounded-[2px] border border-[#4f6b8c] bg-linear-to-b from-[#cfe0f2] to-[#9ebbdb]"><Minimize /></button>
                <button type="button" aria-label="Maximize view" className="flex h-[22px] w-[38px] items-center justify-center rounded-[2px] border border-[#4f6b8c] bg-linear-to-b from-[#cfe0f2] to-[#9ebbdb]"><Maximize /></button>
                <button type="button" aria-label="Close view" className="flex h-[22px] w-[38px] items-center justify-center rounded-[2px] border border-[#6b1c22] bg-linear-to-b from-[#e08c80] via-[#c4402c] via-50% to-[#d8604c]"><Close /></button>
            </div>
        </header>
        <div className="min-h-0 flex-1 bg-black"><Scene /></div>
    </div>
);

const statusCells = ['w-[87px]', 'w-[58px]', 'w-[136px]', 'w-[57px]', 'w-[87px]', 'w-[58px]', 'w-[159px]', 'w-[23px]'];

const PreviewWindow = () => (
    <section className="absolute top-[249px] right-[389px] bottom-[36px] left-[312px] flex flex-col rounded-[8px] border border-[#333] bg-linear-to-r from-white/85 from-69% to-white/15 to-71% px-[7px] pb-[7px] shadow-[0_0_12px_3px_rgba(0,0,0,0.5),inset_0_0_0_1px_rgba(255,255,255,0.5)] backdrop-blur-[5px]">
        <header className="flex h-[35px] shrink-0 items-start justify-between">
            <div className="flex items-center gap-[6px] pt-[6px] pl-px">
                <CubeLogo />
                <h2 className="text-[14px] leading-[20px] text-[#111]">Agilent Momentum 3D Preview (cell_2)</h2>
            </div>
            <div className="flex h-[24px] rounded-b-[4px] border border-t-0 border-[#777] bg-[#333]">
                <button type="button" aria-label="Minimize" className="flex w-[36px] items-center justify-center border-r border-[#777]"><Minimize /></button>
                <button type="button" aria-label="Maximize" className="flex w-[33px] items-center justify-center border-r border-[#777]"><Maximize /></button>
                <button type="button" aria-label="Close" className="flex w-[59px] items-center justify-center"><Close /></button>
            </div>
        </header>
        <div className="flex min-h-0 flex-1 flex-col border border-[#444] bg-[#f3f2f3]">
            <Menu className="h-[28px] pl-[10px] text-[#222]" items={['File', 'View', 'Tools', 'Options', 'Window', 'Help']} />
            <div className="flex h-[42px] shrink-0 items-center border-b border-[#999] pl-[4px]">
                <div className="mr-[9px] h-[32px] border-l-2 border-dotted border-[#bbb]" />
                <div className="flex gap-[9px]">
                    {viewTools.map((tool) => <Tool key={tool.name} name={tool.name}>{tool.art}</Tool>)}
                </div>
                <Sep />
                <div className="flex gap-[9px]">
                    {faceTools.map((tool) => <Tool key={tool.name} name={tool.name}>{tool.art}</Tool>)}
                </div>
            </div>
            <div className="flex min-h-0 flex-1">
                <Properties />
                <ViewPane />
            </div>
            <footer className="flex h-[40px] shrink-0 items-center text-[14px] leading-[32px] text-[#333]">
                <span className="w-[70px] border-r border-[#d5d5d5] pl-[9px]">Orbit</span>
                <span className="w-[47px] border-r border-[#d5d5d5] pl-3">mm</span>
                <span className="flex-1" />
                {statusCells.map((width, i) => (
                    <span key={i} className={`h-8 border-l border-[#d5d5d5] ${width}`}>
                        {i === statusCells.length - 1 && (
                            <svg viewBox="0 0 22 32" className="h-8 w-[22px]" fill="#bbb">
                                <path d="M17 20h2v2h-2zM17 25h2v2h-2zM17 30h2v2h-2zM12 25h2v2h-2zM12 30h2v2h-2zM7 30h2v2H7z" />
                            </svg>
                        )}
                    </span>
                ))}
            </footer>
        </div>
    </section>
);

const Watermark = () => (
    <div className="absolute right-0 bottom-0 flex items-end">
        <svg viewBox="0 0 34 50" className="h-[50px] w-[34px]" fill="none">
            <path d="M20 21c8 1 12 7 11 14M30 40c-2 4-5 7-10 8" stroke="#3b3f46" strokeWidth="3" />
            <path d="M15 2c3 12-13 17-14 28-1 8 3 13 8 16-5-11 2-16 6-23 3-6 4-14 0-21z" fill="#f39a2c" />
            <path d="M19 0c4 13-10 20-11 30-1 8 3 13 8 16-5-11-1-16 2-22 4-7 5-17 1-24z" fill="#e5322d" />
            <text x="9" y="43" fontFamily="Liberation Serif" fontStyle="italic" fontWeight="700" fontSize="20" fill="#2a8cc4">R</text>
        </svg>
        <div className="pb-[4px] font-['Liberation_Sans',sans-serif] font-bold text-[#45484d] italic">
            <p className="text-[20px] leading-[15px]">RAHIM</p>
            <p className="text-[10px] leading-[10px]">SOFTWARES</p>
        </div>
    </div>
);

export default function App() {
    return (
        <main className={`relative min-h-screen overflow-hidden bg-black px-16 ${ui}`}>
            <MainWindow />
            <JobWindow />
            <PreviewWindow />
            <Watermark />
        </main>
    );
}
